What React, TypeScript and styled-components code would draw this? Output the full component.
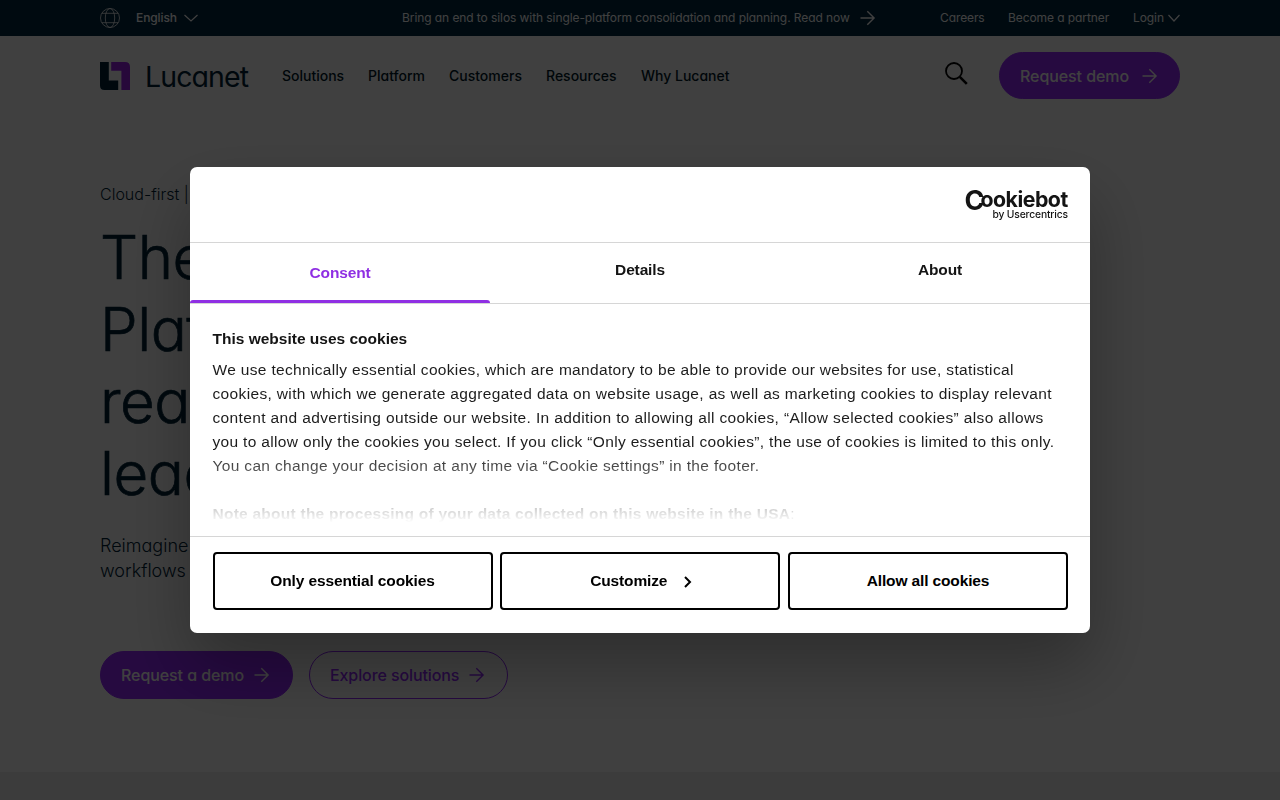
import React from "react";
import styled, { createGlobalStyle } from "styled-components";

const GlobalStyle = createGlobalStyle`
  * { box-sizing: border-box; }
  html, body { margin: 0; padding: 0; overflow: hidden; background: #fff; }
  button { font: inherit; margin: 0; padding: 0; cursor: pointer; }
`;

const navy = "#002337";
const purple = "#9628ff";

const Page = styled.div`
  height: 800px;
  display: flex;
  flex-direction: column;
  overflow: hidden;
  font-family: Inter, "Liberation Sans", sans-serif;
  font-feature-settings: "cv11";
  color: ${navy};
`;

const TopBar = styled.div`
  height: 36px;
  flex: none;
  padding: 0 100px;
  display: flex;
  align-items: center;
  background: #002840;
  color: #fff;
  font-size: 12px;
  line-height: 36px;
`;

const Label = styled.span<{ $w: number; $ls?: number; $weight?: number }>`
  flex: none;
  width: ${(p) => p.$w}px;
  white-space: nowrap;
  letter-spacing: ${(p) => p.$ls ?? 0}px;
  font-weight: ${(p) => p.$weight ?? 400};
`;

const Language = styled.div`
  display: flex;
  align-items: center;
  width: 302px;
`;
const GlobeSlot = styled.span`
  display: flex;
  width: 36px;
`;
const Announcement = styled.div`
  display: flex;
  align-items: center;
  gap: 10px;
  flex: 1;
`;
const TopLinks = styled.div`
  display: flex;
  align-items: center;
  gap: 24px;
`;
const LoginLink = styled.span`
  display: flex;
  align-items: center;
  gap: 4px;
`;

const Header = styled.header`
  height: 79px;
  flex: none;
  padding: 0 100px;
  display: flex;
  align-items: center;
`;
const Brand = styled.div`
  display: flex;
  width: 182px;
`;
const Nav = styled.nav`
  display: flex;
  gap: 24px;
  flex: 1;
  font-size: 14px;
  line-height: 20px;
  color: #001a2a;
`;
const SearchSlot = styled.span`
  display: flex;
  margin: -4px 31px 0 0;
`;

const Pill = styled.button<{ $w: number; $h: number; $gap: number; $outline?: boolean }>`
  width: ${(p) => p.$w}px;
  height: ${(p) => p.$h}px;
  padding-left: 20px;
  display: flex;
  align-items: center;
  gap: ${(p) => p.$gap}px;
  border: 1px solid ${purple};
  border-radius: 24px;
  background: ${(p) => (p.$outline ? "transparent" : purple)};
  color: ${(p) => (p.$outline ? purple : "#fff")};
  font-size: 16px;
  text-align: left;
`;

const Hero = styled.main`
  flex: 1;
  padding: 67px 100px 0;
`;
const Kicker = styled.p`
  margin: 0;
  font-size: 16px;
  line-height: 24px;
  font-weight: 300;
`;
const Headline = styled.h1`
  margin: 15px 0 0;
  font-size: 60px;
  line-height: 72px;
  font-weight: 300;
  letter-spacing: -0.5px;
  -webkit-text-stroke: 0.7px ${navy};
`;
const Lead = styled.p`
  margin: 24px 0 0;
  font-size: 18px;
  line-height: 25px;
  font-weight: 300;
`;
const Actions = styled.div`
  display: flex;
  gap: 16px;
  margin-top: 68px;
`;
const NextSection = styled.section`
  height: 28px;
  flex: none;
  background: #eee;
`;

const Backdrop = styled.div`
  position: fixed;
  inset: 0;
  display: flex;
  align-items: center;
  justify-content: center;
  background: rgba(0, 0, 0, 0.75);
`;
const Dialog = styled.div`
  width: 900px;
  height: 466px;
  display: flex;
  flex-direction: column;
  overflow: hidden;
  border-radius: 7px;
  background: #fff;
  color: #141414;
  box-shadow: 0 32px 68px rgba(0, 0, 0, 0.3);
  font-family: "Liberation Sans", Arial, sans-serif;
  font-size: 15.5px;
`;
const DialogHeader = styled.div`
  height: 76px;
  display: flex;
  justify-content: flex-end;
  padding: 19px 20px 0 0;
  border-bottom: 1px solid #d6d6d6;
`;
const Tabs = styled.div`
  height: 61px;
  display: grid;
  grid-template-columns: repeat(3, 1fr);
  border-bottom: 1px solid #d6d6d6;
`;
const Tab = styled.div<{ $active?: boolean }>`
  position: relative;
  padding-top: ${(p) => (p.$active ? 18 : 15)}px;
  text-align: center;
  font-weight: 700;
  line-height: 24px;
  letter-spacing: -0.15px;
  color: ${(p) => (p.$active ? "#8f2fe3" : "#141414")};
  &::after {
    content: "";
    display: ${(p) => (p.$active ? "block" : "none")};
    position: absolute;
    left: 0;
    right: 0;
    bottom: 0;
    height: 3px;
    border-radius: 4px 4px 0 0;
    background: #8f2fe3;
  }
`;
const Content = styled.div`
  position: relative;
  height: 232px;
  padding: 23px 22px 0 22.5px;
  overflow: hidden;
  line-height: 24px;
`;
const ContentTitle = styled.h2`
  margin: 0 0 7px;
  font-size: 15.5px;
  line-height: 24px;
  font-weight: 700;
`;
const Line = styled.div<{ $ls: number; $bold?: boolean }>`
  height: 24px;
  white-space: nowrap;
  letter-spacing: ${(p) => p.$ls}px;
  font-weight: ${(p) => (p.$bold ? 700 : 400)};
  color: ${(p) => (p.$bold ? "#141414" : "#1c1c1c")};
`;
const Plain = styled.span`
  font-weight: 400;
`;
const Gap = styled.div`
  height: 24px;
`;
const Fade = styled.div`
  position: absolute;
  left: 0;
  right: 0;
  bottom: 0;
  height: 84px;
  background: linear-gradient(rgba(255, 255, 255, 0), #fff 84%);
`;
const Footer = styled.div`
  height: 97px;
  padding: 15px 22px 0 22.5px;
  display: grid;
  grid-template-columns: repeat(3, 280px);
  justify-content: space-between;
  border-top: 1px solid #d6d6d6;
`;
const Choice = styled.button`
  height: 58px;
  padding-bottom: 1px;
  display: flex;
  align-items: center;
  justify-content: center;
  gap: 17px;
  border: 2px solid #000;
  border-radius: 4px;
  background: #fff;
  color: #000;
  font-weight: 700;
  letter-spacing: -0.13px;
`;
const NextIcon = styled.svg`
  margin: 2px -2px 0 0;
`;

const Arrow = () => (
  <svg width="16" height="16" viewBox="0 0 16 16" fill="none" stroke="currentColor" strokeWidth="1.4">
    <path d="M.5 8h13.6M7.3 1.2l6.8 6.8-6.8 6.8" />
  </svg>
);

const Chevron = ({ w }: { w: number }) => (
  <svg width={w} height="8" viewBox={`0 0 ${w} 8`} fill="none" stroke="currentColor" strokeWidth="1.2">
    <path d={`M.5 1l${w / 2 - 0.5} 6 ${w / 2 - 0.5}-6`} />
  </svg>
);

const Globe = () => (
  <svg width="20" height="20" viewBox="0 0 20 20" fill="none" stroke="#fff" strokeWidth=".8">
    <circle cx="10" cy="10" r="9.5" />
    <ellipse cx="10" cy="10" rx="4.7" ry="9.5" />
    <path d="M1.7 5.3h16.6M1.7 14.7h16.6" />
  </svg>
);

const LogoSvg = styled.svg`
  overflow: visible;
`;

const LucanetLogo = () => (
  <LogoSvg width="150" height="30" viewBox="0 0 150 30">
    <path d="M0 1h8.8v18.4h9.4V29H4.5Q0 29 0 24.5z" fill={navy} />
    <path d="M11.2 1h13.9Q30 1 30 6v23h-8.6V9.8H11.2z" fill="#9b20e8" />
    <text x="45" y="25.7" fontSize="28.5" fontWeight="400" textLength="104" fill={navy} lengthAdjust="spacing">
      Lucanet
    </text>
  </LogoSvg>
);

const CookiebotLogo = () => (
  <LogoSvg width="106" height="38" viewBox="0 0 106 38" fill="#141414" fontFamily="Inter">
    <text y="24" fontWeight="700">
      <tspan x="0.5" fontSize="27">C</tspan>
      <tspan x="16.5" y="20.7" fontSize="21.3" letterSpacing="-0.5">ookiebot</tspan>
    </text>
    <text x="28.5" y="32" fontWeight="500" fontSize="10.3" textLength="75.5">
      by Usercentrics
    </text>
  </LogoSvg>
);

export default function App() {
  return (
    <>
      <GlobalStyle />
      <Page>
        <TopBar>
          <Language>
            <GlobeSlot><Globe /></GlobeSlot>
            <Label $w={48} $weight={500} $ls={-0.1}>English</Label>
            <Chevron w={14} />
          </Language>
          <Announcement>
            <Label $w={448} $ls={-0.08}>
              Bring an end to silos with single-platform consolidation and planning. Read now
            </Label>
            <Arrow />
          </Announcement>
          <TopLinks>
            <Label $w={44} $ls={-0.1}>Careers</Label>
            <Label $w={101} $ls={-0.08}>Become a partner</Label>
            <LoginLink>
              <Label $w={31} $ls={-0.08}>Login</Label>
              <Chevron w={12} />
            </LoginLink>
          </TopLinks>
        </TopBar>
        <Header>
          <Brand><LucanetLogo /></Brand>
          <Nav>
            <Label $w={62} $weight={500}>Solutions</Label>
            <Label $w={57} $weight={500}>Platform</Label>
            <Label $w={73} $weight={500}>Customers</Label>
            <Label $w={71} $weight={500}>Resources</Label>
            <Label $w={88} $weight={500}>Why Lucanet</Label>
          </Nav>
          <SearchSlot>
            <svg width="23" height="23" viewBox="0 0 23 23" fill="none" stroke="#000">
              <circle cx="9" cy="9" r="8" strokeWidth="1.8" />
              <path d="M14.8 14.8l7 7" strokeWidth="2.6" />
            </svg>
          </SearchSlot>
          <Pill $w={181} $h={47} $gap={13}>
            <Label $w={109} $weight={500} $ls={-0.08}>Request demo</Label>
            <Arrow />
          </Pill>
        </Header>
        <Hero>
          <Kicker>Cloud-first | AI-powered</Kicker>
          <Headline>
            The CFO<br />Platform<br />ready to<br />lead
          </Headline>
          <Lead>
            Reimagine your finance<br />workflows with Lucanet
          </Lead>
          <Actions>
            <Pill $w={193} $h={48} $gap={10}>
              <Label $w={123} $weight={500} $ls={-0.08}>Request a demo</Label>
              <Arrow />
            </Pill>
            <Pill $w={199} $h={48} $gap={10} $outline>
              <Label $w={129} $weight={500} $ls={-0.1}>Explore solutions</Label>
              <Arrow />
            </Pill>
          </Actions>
        </Hero>
        <NextSection />
      </Page>
      <Backdrop>
        <Dialog role="dialog">
          <DialogHeader><CookiebotLogo /></DialogHeader>
          <Tabs>
            <Tab $active>Consent</Tab>
            <Tab>Details</Tab>
            <Tab>About</Tab>
          </Tabs>
          <Content>
            <ContentTitle>This website uses cookies</ContentTitle>
            <Line $ls={0.33}>We use technically essential cookies, which are mandatory to be able to provide our websites for use, statistical</Line>
            <Line $ls={0.35}>cookies, with which we generate aggregated data on website usage, as well as marketing cookies to display relevant</Line>
            <Line $ls={0.37}>content and advertising outside our website. In addition to allowing all cookies, “Allow selected cookies” also allows</Line>
            <Line $ls={0.33}>you to allow only the cookies you select. If you click “Only essential cookies”, the use of cookies is limited to this only.</Line>
            <Line $ls={0.34}>You can change your decision at any time via “Cookie settings” in the footer.</Line>
            <Gap />
            <Line $ls={0.25} $bold>Note about the processing of your data collected on this website in the USA<Plain>:</Plain></Line>
            <Fade />
          </Content>
          <Footer>
            <Choice>Only essential cookies</Choice>
            <Choice>
              Customize
              <NextIcon width="8" height="12" viewBox="0 0 8 12" fill="none" stroke="#000" strokeWidth="2">
                <path d="M1 1l5 5-5 5" />
              </NextIcon>
            </Choice>
            <Choice>Allow all cookies</Choice>
          </Footer>
        </Dialog>
      </Backdrop>
    </>
  );
}
